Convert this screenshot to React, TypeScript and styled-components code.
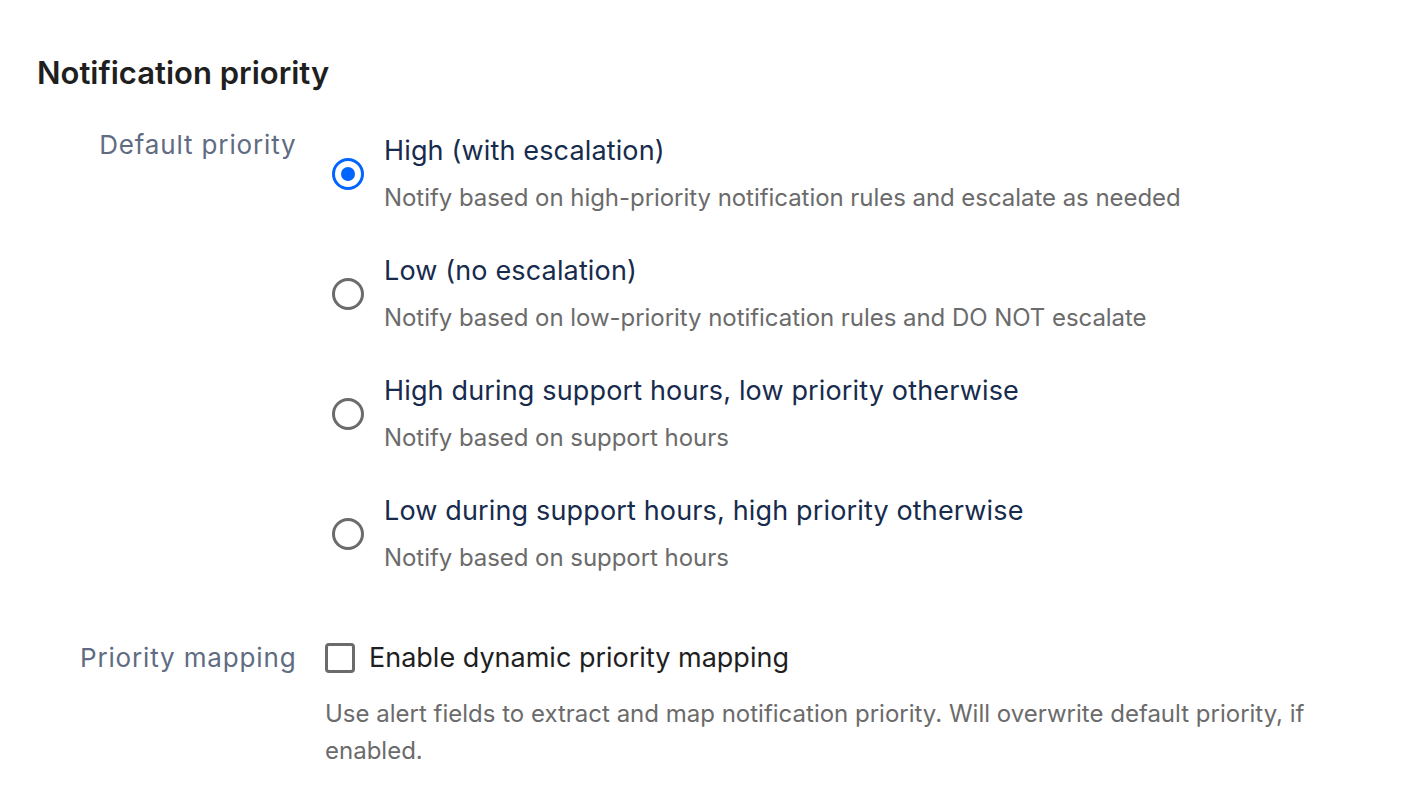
import React, { useState } from "react";
import styled, { createGlobalStyle } from "styled-components";

const GlobalStyle = createGlobalStyle`
  html, body {
    margin: 0;
    padding: 0;
    background: #ffffff;
  }
  body {
    font-family: Inter, "Noto Sans", "Liberation Sans", sans-serif;
    -webkit-font-smoothing: antialiased;
  }
`;

const Page = styled.div`
  padding: 52px 37px 40px;
`;

const Heading = styled.h2`
  margin: 0 0 31px;
  font-size: 31px;
  line-height: 42px;
  font-weight: 600;
  color: #1f1f1f;
`;

const FieldRow = styled.div<{ $gap?: number }>`
  display: grid;
  grid-template-columns: 258px 1fr;
  column-gap: 30px;
  margin-bottom: ${({ $gap }) => $gap ?? 0}px;
`;

const FieldLabel = styled.div`
  text-align: right;
  font-size: 26px;
  line-height: 40px;
  letter-spacing: 0.85px;
  margin-right: -1.5px;
  color: #5f6c82;
  white-space: nowrap;
`;

const OptionList = styled.div`
  display: flex;
  flex-direction: column;
  gap: 39px;
  padding-top: 8px;
`;

const OptionRow = styled.label`
  display: flex;
  align-items: center;
  gap: 20px;
  cursor: pointer;
  padding-left: 7px;
`;

const RadioCircle = styled.span<{ $checked: boolean }>`
  flex: none;
  width: 32px;
  height: 32px;
  box-sizing: border-box;
  border-radius: 50%;
  border: 3px solid ${({ $checked }) => ($checked ? "#0065ff" : "#6b6b6b")};
  display: flex;
  align-items: center;
  justify-content: center;
  &::after {
    content: "";
    width: 14px;
    height: 14px;
    border-radius: 50%;
    background: ${({ $checked }) => ($checked ? "#0065ff" : "transparent")};
  }
`;

const OptionText = styled.div`
  display: flex;
  flex-direction: column;
  gap: 13px;
`;

const OptionTitle = styled.div`
  font-size: 27px;
  line-height: 36px;
  letter-spacing: 0.15px;
  color: #172b4d;
`;

const OptionDesc = styled.div`
  font-size: 24px;
  line-height: 32px;
  letter-spacing: -0.05px;
  color: #6b6b6b;
`;

const CheckRow = styled.label`
  display: flex;
  align-items: center;
  gap: 14px;
  cursor: pointer;
`;

const CheckBox = styled.span<{ $checked: boolean }>`
  flex: none;
  width: 30px;
  height: 30px;
  box-sizing: border-box;
  border: 3px solid #6b6b6b;
  border-radius: 4px;
  background: ${({ $checked }) => ($checked ? "#0065ff" : "#fff")};
`;

const CheckLabel = styled.span`
  font-size: 27px;
  line-height: 40px;
  color: #1f1f1f;
`;

const HelpText = styled.p`
  margin: 17px 0 0;
  font-size: 24px;
  line-height: 37px;
  color: #6b6b6b;
  max-width: 1000px;
`;

const options = [
  {
    title: "High (with escalation)",
    desc: "Notify based on high-priority notification rules and escalate as needed",
  },
  {
    title: "Low (no escalation)",
    desc: "Notify based on low-priority notification rules and DO NOT escalate",
  },
  {
    title: "High during support hours, low priority otherwise",
    desc: "Notify based on support hours",
  },
  {
    title: "Low during support hours, high priority otherwise",
    desc: "Notify based on support hours",
  },
];

export default function App() {
  const [selected, setSelected] = useState(0);
  const [mapping, setMapping] = useState(false);

  return (
    <>
      <GlobalStyle />
      <Page>
        <Heading>Notification priority</Heading>
        <FieldRow $gap={64}>
          <FieldLabel>Default priority</FieldLabel>
          <OptionList>
            {options.map((o, i) => (
              <OptionRow key={o.title} onClick={() => setSelected(i)}>
                <RadioCircle $checked={selected === i} />
                <OptionText>
                  <OptionTitle>{o.title}</OptionTitle>
                  <OptionDesc>{o.desc}</OptionDesc>
                </OptionText>
              </OptionRow>
            ))}
          </OptionList>
        </FieldRow>
        <FieldRow>
          <FieldLabel>Priority mapping</FieldLabel>
          <div>
            <CheckRow onClick={() => setMapping(!mapping)}>
              <CheckBox $checked={mapping} />
              <CheckLabel>Enable dynamic priority mapping</CheckLabel>
            </CheckRow>
            <HelpText>
              Use alert fields to extract and map notification priority. Will
              overwrite default priority, if enabled.
            </HelpText>
          </div>
        </FieldRow>
      </Page>
    </>
  );
}
